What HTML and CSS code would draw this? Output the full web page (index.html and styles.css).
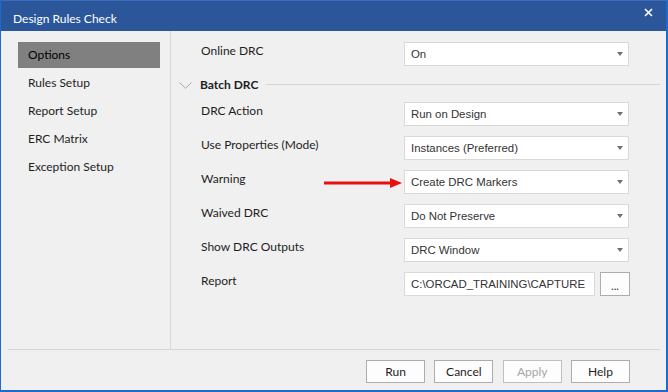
FILE: index.html
```html
<!DOCTYPE html>
<html>
<head>
<meta charset="utf-8">
<link rel="stylesheet" href="styles.css">
</head>
<body>
<div class="window">
  <div class="titlebar">
    <span class="title">Design Rules Check</span>
    <svg class="close" width="9" height="9" viewBox="0 0 9 9"><path d="M1 1L8 8M8 1L1 8" stroke="#fff" stroke-width="1.6" fill="none"/></svg>
  </div>
  <div class="body">
    <nav class="sidebar">
      <div class="nav-item active">Options</div>
      <div class="nav-item">Rules Setup</div>
      <div class="nav-item">Report Setup</div>
      <div class="nav-item">ERC Matrix</div>
      <div class="nav-item">Exception Setup</div>
    </nav>
    <section class="main">
      <div class="row">
        <span class="label">Online DRC</span>
        <div class="combo"><span>On</span><i class="caret"></i></div>
      </div>
      <div class="group-header">
        <svg class="chevron" width="13" height="7" viewBox="0 0 13 7"><path d="M0.5 0.5L6.5 6.3L12.5 0.5" stroke="#a8a8a8" stroke-width="1" fill="none"/></svg>
        <span class="group-title">Batch DRC</span>
        <span class="rule"></span>
      </div>
      <div class="rows">
        <div class="row">
          <span class="label">DRC Action</span>
          <div class="combo"><span>Run on Design</span><i class="caret"></i></div>
        </div>
        <div class="row">
          <span class="label">Use Properties (Mode)</span>
          <div class="combo"><span>Instances (Preferred)</span><i class="caret"></i></div>
        </div>
        <div class="row row-marked">
          <span class="label">Warning</span>
          <svg class="pointer" width="78" height="10" viewBox="0 0 78 10"><rect x="0" y="3.5" width="67" height="3" fill="#e81010"/><path d="M66 0L78 5L66 10Z" fill="#e81010"/></svg>
          <div class="combo"><span>Create DRC Markers</span><i class="caret"></i></div>
        </div>
        <div class="row">
          <span class="label">Waived DRC</span>
          <div class="combo"><span>Do Not Preserve</span><i class="caret"></i></div>
        </div>
        <div class="row">
          <span class="label">Show DRC Outputs</span>
          <div class="combo"><span>DRC Window</span><i class="caret"></i></div>
        </div>
        <div class="row">
          <span class="label">Report</span>
          <div class="path-field">
            <div class="textbox"><span>C:\ORCAD_TRAINING\CAPTURE</span></div>
            <button class="browse">...</button>
          </div>
        </div>
      </div>
    </section>
  </div>
  <div class="footer">
    <button class="btn">Run</button>
    <button class="btn">Cancel</button>
    <button class="btn disabled">Apply</button>
    <button class="btn">Help</button>
  </div>
</div>
</body>
</html>
```
FILE: styles.css
```css
* { box-sizing: border-box; }
html, body { margin: 0; padding: 0; }
body {
  width: 668px;
  height: 392px;
  overflow: hidden;
  font-family: Lato, "Open Sans", sans-serif;
  font-size: 12px;
  color: #1e1e1e;
}
.window {
  width: 668px;
  height: 392px;
  background: #f0f0f0;
  border-left: 1px solid #1e6bd0;
  border-right: 2px solid #1e6bd0;
  border-bottom: 2px solid #1e6bd0;
  display: flex;
  flex-direction: column;
}
.titlebar {
  flex: 0 0 31px;
  background: #2b579a;
  border-top: 1px solid #3a6cbf;
  display: flex;
  align-items: flex-start;
  justify-content: space-between;
  padding: 0 13px 0 12px;
  color: #fff;
}
.title {
  margin-top: 10px;
  line-height: 16px;
  font-size: 12px;
}
.close { margin-top: 7px; }
.body {
  flex: 0 0 319px;
  display: flex;
  margin: 0 6px 0 7px;
  border-bottom: 1px solid #d5d5d5;
}
.sidebar {
  width: 163px;
  border-right: 1px solid #d7d7d7;
  padding: 11px 10px 0 10px;
  display: flex;
  flex-direction: column;
  gap: 2px;
}
.nav-item {
  height: 26px;
  line-height: 26px;
  padding-left: 10px;
  color: #1e1e1e;
}
.nav-item.active { background: #808080; color: #000; }
.main {
  flex: 1;
  padding: 11px 0 0 30px;
  display: flex;
  flex-direction: column;
}
.rows {
  display: flex;
  flex-direction: column;
  gap: 10px;
}
.row {
  display: grid;
  grid-template-columns: 203px 225px;
  height: 24px;
}
.row-marked { position: relative; }
.pointer {
  position: absolute;
  left: 123px;
  top: 8px;
}
.label {
  line-height: 18px;
  color: #1e1e1e;
}
.combo {
  height: 24px;
  background: #fff;
  border: 1px solid #d9d9d9;
  display: flex;
  align-items: center;
  justify-content: space-between;
  padding: 0 5px 0 6px;
  font-family: "Liberation Sans", Arial, sans-serif;
  font-size: 11.4px;
  color: #333;
}
.caret {
  width: 0;
  height: 0;
  border-left: 3.5px solid transparent;
  border-right: 3.5px solid transparent;
  border-top: 4px solid #707070;
}
.group-header {
  height: 16px;
  margin: 10px 0 10px -22px;
  display: flex;
  align-items: center;
}
.chevron { margin-top: 3px; }
.group-title {
  margin-left: 8px;
  font-weight: 700;
  color: #1e1e1e;
}
.rule {
  flex: 1;
  height: 1px;
  background: #d5d5d5;
  margin-left: 8px;
}
.path-field {
  display: flex;
  gap: 5px;
  width: 226px;
}
.textbox {
  width: 191px;
  height: 24px;
  background: #fff;
  border: 1px solid #d9d9d9;
  display: flex;
  align-items: center;
  padding-left: 6px;
  overflow: hidden;
  white-space: nowrap;
  font-family: "Liberation Sans", Arial, sans-serif;
  font-size: 11.4px;
  color: #333;
}
.browse {
  width: 30px;
  height: 24px;
  background: #fdfdfd;
  border: 1px solid #adadad;
  padding: 3px 0 0 0;
  font-family: Lato, sans-serif;
  font-size: 11px;
  color: #333;
}
.footer {
  flex: 1;
  display: flex;
  justify-content: flex-end;
  align-items: flex-start;
  padding: 10px 36px 0 0;
  gap: 9.33px;
}
.btn {
  width: 59px;
  height: 23px;
  background: #fdfdfd;
  border: 1px solid #adadad;
  padding: 0;
  font-family: Lato, "Open Sans", sans-serif;
  font-size: 12px;
  color: #1e1e1e;
}
.btn.disabled { color: #a6a6a6; border-color: #bfbfbf; }
```
